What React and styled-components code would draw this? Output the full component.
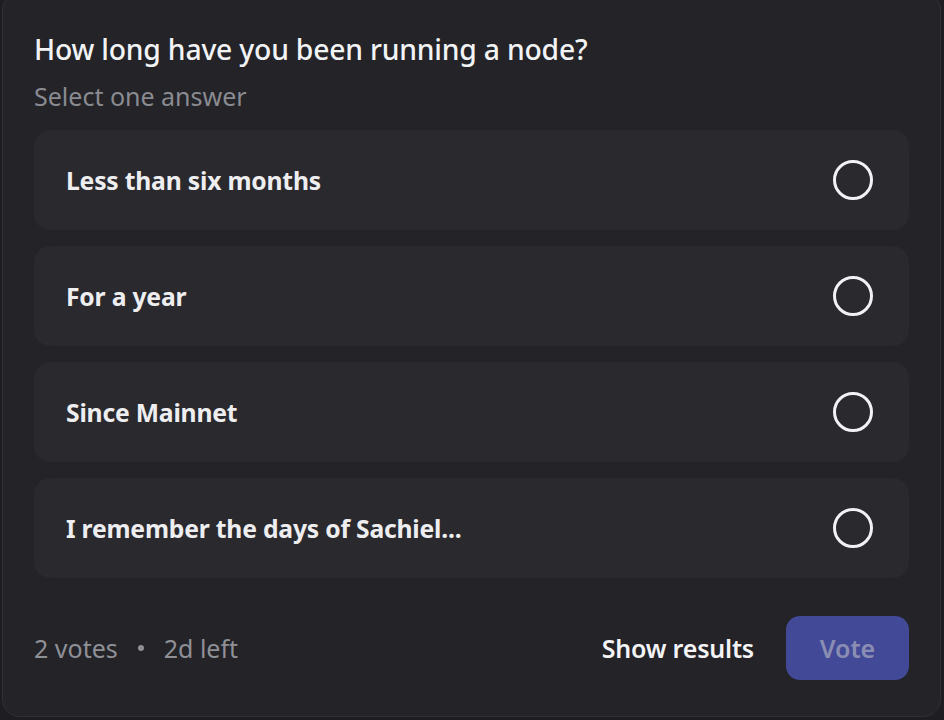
import React from "react";
import styled, { createGlobalStyle } from "styled-components";

const Global = createGlobalStyle`
  html, body { margin: 0; padding: 0; background: #1e1e22; }
  body { font-family: "Noto Sans", "Open Sans", sans-serif; }
  #root { width: 944px; height: 720px; overflow: hidden; }
`;

const Card = styled.div`
  box-sizing: border-box;
  margin: -8px 3px 0 2px;
  height: 725px;
  background: #232328;
  border: 1.5px solid #303036;
  border-radius: 18px;
  padding: 37px 31px 0 31px;
  display: flex;
  flex-direction: column;
`;

const Title = styled.h1`
  margin: 0;
  font-size: 28.3px;
  font-weight: 500;
  color: #f2f3f5;
  line-height: 38px;
  letter-spacing: -0.2px;
`;

const Subtitle = styled.div`
  margin-top: 12px;
  font-size: 25px;
  color: #8a8b91;
  line-height: 32px;
`;

const Options = styled.div`
  margin-top: 18px;
  display: flex;
  flex-direction: column;
  gap: 16px;
`;

const Option = styled.div`
  height: 100px;
  background: #29292e;
  border-radius: 16px;
  display: flex;
  align-items: center;
  justify-content: space-between;
  padding: 0 36px 0 32px;
`;

const OptionLabel = styled.span`
  font-size: 24.7px;
  font-weight: 700;
  color: #eeeef0;
  letter-spacing: -0.2px;
`;

const Radio = styled.span`
  box-sizing: border-box;
  width: 40px;
  height: 40px;
  border-radius: 50%;
  border: 3px solid #f2f2f4;
`;

const Footer = styled.div`
  margin-top: 38px;
  display: flex;
  align-items: center;
  justify-content: space-between;
`;

const Meta = styled.div`
  display: flex;
  align-items: center;
  gap: 20px;
  font-size: 25px;
  color: #8f9096;
`;

const Dot = styled.span`
  width: 6px;
  height: 6px;
  border-radius: 50%;
  background: #8f9096;
`;

const Actions = styled.div`
  display: flex;
  align-items: center;
  gap: 32px;
`;

const LinkButton = styled.button`
  background: none;
  border: none;
  padding: 0;
  font-family: inherit;
  font-size: 25px;
  font-weight: 600;
  color: #f4f4f6;
  letter-spacing: -0.2px;
`;

const VoteButton = styled.button`
  width: 123px;
  height: 64px;
  border: none;
  border-radius: 14px;
  background: #424997;
  color: #8b8eb3;
  font-family: inherit;
  font-size: 25px;
  font-weight: 600;
`;

const options = [
  "Less than six months",
  "For a year",
  "Since Mainnet",
  "I remember the days of Sachiel...",
];

export default function App() {
  return (
    <>
      <Global />
      <Card>
        <Title>How long have you been running a node?</Title>
        <Subtitle>Select one answer</Subtitle>
        <Options>
          {options.map((o) => (
            <Option key={o}>
              <OptionLabel>{o}</OptionLabel>
              <Radio />
            </Option>
          ))}
        </Options>
        <Footer>
          <Meta>
            <span>2 votes</span>
            <Dot />
            <span>2d left</span>
          </Meta>
          <Actions>
            <LinkButton>Show results</LinkButton>
            <VoteButton>Vote</VoteButton>
          </Actions>
        </Footer>
      </Card>
    </>
  );
}
